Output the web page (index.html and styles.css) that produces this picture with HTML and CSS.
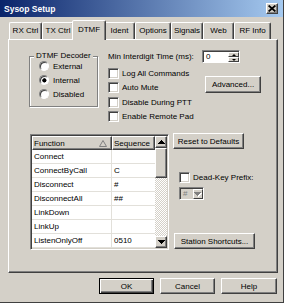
FILE: index.html
```html
<!DOCTYPE html>
<html lang="en">

<head>
    <meta charset="UTF-8">
    <meta name="viewport" content="width=device-width, initial-scale=1.0">
    <title>Sysop Setup</title>
    <link rel="stylesheet" href="styles.css">
</head>

<body>

    <div class="window">
        <div class="titlebar">
            <span class="title">Sysop Setup</span>
            <span class="close-btn">
                <svg width="8" height="7" viewBox="0 0 8 7"><path d="M0.6 0.5l6.8 6M7.4 0.5l-6.8 6" stroke="#000" stroke-width="1.7" fill="none"/></svg>
            </span>
        </div>

        <div class="tabs">
            <div class="tab">RX Ctrl</div>
            <div class="tab">TX Ctrl</div>
            <div class="tab active">DTMF</div>
            <div class="tab">Ident</div>
            <div class="tab">Options</div>
            <div class="tab">Signals</div>
            <div class="tab">Web</div>
            <div class="tab">RF Info</div>
        </div>

        <div class="panel">
            <div class="top-row">
                <div class="group">
                    <div class="group-title">DTMF Decoder</div>
                    <label class="radio"><span class="radio-dot"></span>External</label>
                    <label class="radio"><span class="radio-dot checked"></span>Internal</label>
                    <label class="radio"><span class="radio-dot"></span>Disabled</label>
                </div>

                <div class="top-right">
                    <div class="interdigit">
                        <span class="interdigit-label">Min Interdigit Time (ms):</span>
                        <div class="spinbox">
                            <span class="spin-value">0</span>
                            <div class="spin-buttons">
                                <span class="spin-btn"><svg width="5" height="3" viewBox="0 0 5 3"><path d="M2 0h1v1h1v1h1v1H0V2h1V1h1z"/></svg></span>
                                <span class="spin-btn"><svg width="5" height="3" viewBox="0 0 5 3"><path d="M0 0h5v1H4v1H3v1H2V2H1V1H0z"/></svg></span>
                            </div>
                        </div>
                    </div>
                    <div class="options">
                        <div class="check-list">
                            <label class="check"><span class="check-box"></span>Log All Commands</label>
                            <label class="check"><span class="check-box"></span>Auto Mute</label>
                            <label class="check"><span class="check-box"></span>Disable During PTT</label>
                            <label class="check"><span class="check-box"></span>Enable Remote Pad</label>
                        </div>
                        <button class="btn advanced">Advanced...</button>
                    </div>
                </div>
            </div>

            <div class="bottom-row">
                <div class="listview">
                    <div class="lv-table">
                        <div class="lv-header">
                            <div class="lv-head">Function
                                <svg width="8" height="7" viewBox="0 0 8 7"><path d="M4 0.5L7.5 6.5H0.5Z" fill="none" stroke="#808080"/></svg>
                            </div>
                            <div class="lv-head">Sequence</div>
                        </div>
                        <div class="lv-row"><span class="lv-cell">Connect</span><span class="lv-cell"></span></div>
                        <div class="lv-row"><span class="lv-cell">ConnectByCall</span><span class="lv-cell">C</span></div>
                        <div class="lv-row"><span class="lv-cell">Disconnect</span><span class="lv-cell">#</span></div>
                        <div class="lv-row"><span class="lv-cell">DisconnectAll</span><span class="lv-cell">##</span></div>
                        <div class="lv-row"><span class="lv-cell">LinkDown</span><span class="lv-cell"></span></div>
                        <div class="lv-row"><span class="lv-cell">LinkUp</span><span class="lv-cell"></span></div>
                        <div class="lv-row"><span class="lv-cell">ListenOnlyOff</span><span class="lv-cell">0510</span></div>
                    </div>
                    <div class="scrollbar">
                        <span class="sb-btn"><svg width="7" height="4" viewBox="0 0 7 4"><path d="M3 0h1v1h1v1h1v1h1v1H0V3h1V2h1V1h1z"/></svg></span>
                        <span class="sb-thumb"></span>
                        <span class="sb-track"></span>
                        <span class="sb-btn"><svg width="7" height="4" viewBox="0 0 7 4"><path d="M0 0h7v1H6v1H5v1H4v1H3V3H2V2H1V1H0z"/></svg></span>
                    </div>
                </div>

                <div class="side">
                    <button class="btn reset">Reset to Defaults</button>
                    <label class="deadkey"><span class="check-box"></span>Dead-Key Prefix:</label>
                    <div class="combo">
                        <span class="combo-value">#</span>
                        <span class="combo-btn"><svg width="8" height="5" viewBox="0 0 8 5"><path d="M1 1h7v1H7v1H6v1H5v1H4V4H3V3H2V2H1z" fill="#fff"/><path d="M0 0h7v1H6v1H5v1H4v1H3V3H2V2H1V1H0z" fill="#808080"/></svg></span>
                    </div>
                    <button class="btn shortcuts">Station Shortcuts...</button>
                </div>
            </div>
        </div>

        <div class="dialog-buttons">
            <button class="btn btn-default">OK</button>
            <button class="btn">Cancel</button>
            <button class="btn help">Help</button>
        </div>
    </div>

</body>

</html>
```

FILE: styles.css
```css
body {
    margin: 0;
    font-family: "Liberation Sans", Arial, sans-serif;
    font-size: 8px;
    color: #000;
}

.window {
    width: 284px;
    height: 303px;
    box-sizing: border-box;
    background: #D4D0C8;
    border-right: 1px solid #404040;
    border-bottom: 1px solid #404040;
    display: flex;
    flex-direction: column;
}

/* title bar */
.titlebar {
    height: 17px;
    flex: none;
    display: flex;
    align-items: center;
    padding: 0 5px 0 4px;
    background: linear-gradient(90deg, #0A246A, #A6CAF0);
    color: #fff;
    font-weight: bold;
    font-size: 8.5px;
}

.close-btn {
    margin-left: auto;
    width: 12px;
    height: 11px;
    box-sizing: border-box;
    background: #D4D0C8;
    border: 1px solid;
    border-color: #fff #404040 #404040 #fff;
    box-shadow: inset -1px -1px #808080;
    display: flex;
    align-items: center;
    justify-content: center;
}

/* tabs */
.tabs {
    display: grid;
    grid-template-columns: 33px 32px 30px 31px 36px 32px 31px 37px;
    align-items: end;
    height: 19px;
    margin-top: 3px;
    padding-left: 9px;
    flex: none;
}

.tab {
    height: 17px;
    box-sizing: border-box;
    border: 1px solid;
    border-bottom: none;
    border-color: #fff #404040 transparent #fff;
    box-shadow: inset -1px 0 #808080;
    border-radius: 2px 2px 0 0;
    line-height: 15px;
    text-align: center;
    white-space: nowrap;
}

.tab.active {
    height: 20px;
    margin: 0 -2px -1px;
    position: relative;
    z-index: 1;
    background: #D4D0C8;
    line-height: 17px;
}

/* main panel */
.panel {
    height: 234px;
    flex: none;
    box-sizing: border-box;
    margin: 0 5px 0 8px;
    border: 1px solid;
    border-color: #fff #404040 #404040 #fff;
    box-shadow: inset -1px -1px #808080;
}

.top-row {
    display: flex;
    align-items: flex-start;
    margin-top: 10px;
    padding-left: 20px;
}

.group {
    width: 69px;
    box-sizing: border-box;
    margin-top: 6px;
    border: 1px solid #808080;
    box-shadow: 1px 1px #fff, inset 1px 1px #fff;
    padding: 0 0 5px 9px;
}

.group-title {
    width: fit-content;
    margin: -7px 0 -3px -5px;
    padding: 0 2px;
    background: #D4D0C8;
    line-height: 12px;
}

.radio {
    display: flex;
    align-items: center;
    gap: 4px;
    height: 14px;
}

.radio-dot {
    width: 10px;
    height: 10px;
    box-sizing: border-box;
    border-radius: 50%;
    background: #fff;
    border: 1px solid;
    border-color: #808080 #fff #fff #808080;
    box-shadow: inset 1px 1px #404040;
}

.radio-dot.checked {
    background: radial-gradient(circle at 55% 55%, #000 0 1.8px, #fff 2.4px);
}

.top-right {
    margin-left: 10px;
}

.interdigit {
    display: flex;
    align-items: center;
    height: 13px;
}

.interdigit-label {
    width: 94px;
    white-space: nowrap;
}

.spinbox {
    width: 38px;
    height: 13px;
    box-sizing: border-box;
    display: flex;
    background: #fff;
    border: 1px solid;
    border-color: #808080 #fff #fff #808080;
    padding: 1px 0 0 1px;
    box-shadow: inset 1px 1px #404040;
}

.spin-value {
    flex: 1;
    padding-left: 2px;
    line-height: 10px;
}

.spin-buttons {
    width: 11px;
    display: flex;
    flex-direction: column;
}

.spin-btn {
    flex: 1;
    box-sizing: border-box;
    background: #D4D0C8;
    border: 1px solid;
    border-color: #fff #404040 #404040 #fff;
    display: flex;
    align-items: center;
    justify-content: center;
}

.spin-btn svg {
    width: 4px;
    height: 2px;
}

.options {
    display: flex;
    align-items: flex-start;
    margin-top: 3px;
}

.check-list {
    width: 97px;
}

.check {
    display: flex;
    align-items: center;
    gap: 3px;
    height: 14.5px;
    white-space: nowrap;
}

.check-box {
    width: 11px;
    height: 11px;
    flex: none;
    box-sizing: border-box;
    background: #fff;
    border: 1px solid;
    border-color: #808080 #fff #fff #808080;
    box-shadow: inset 1px 1px #404040, inset -1px -1px #D4D0C8;
}

/* buttons */
.btn {
    font: inherit;
    color: #000;
    background: #D4D0C8;
    border: 1px solid;
    border-color: #fff #404040 #404040 #fff;
    box-shadow: inset -1px -1px #808080;
    padding: 0;
    box-sizing: border-box;
    display: flex;
    align-items: center;
    justify-content: center;
    white-space: nowrap;
}

.advanced {
    width: 56px;
    height: 17px;
    margin-top: 10px;
}

/* list view */
.bottom-row {
    display: flex;
    margin-top: 10px;
    padding-left: 21px;
}

.listview {
    width: 139px;
    height: 116px;
    box-sizing: border-box;
    display: flex;
    background: #fff;
    border: 1px solid;
    border-color: #808080 #fff #fff #808080;
    padding: 1px;
    box-shadow: inset 1px 1px #404040, inset -1px -1px #D4D0C8;
}

.lv-table {
    width: 123px;
}

.lv-header {
    display: grid;
    grid-template-columns: 80px 43px;
    height: 14px;
}

.lv-head {
    display: flex;
    align-items: center;
    justify-content: space-between;
    padding: 0 4px 0 1px;
    background: #D4D0C8;
    border: 1px solid;
    border-color: #fff #404040 #404040 #fff;
    box-shadow: inset -1px -1px #808080;
}

.lv-row {
    display: grid;
    grid-template-columns: 80px 43px;
    height: 14px;
    box-sizing: border-box;
    border-bottom: 1px solid #E2E0DA;
}

.lv-cell {
    padding-left: 2px;
    line-height: 13px;
    white-space: nowrap;
}

.lv-cell:first-child {
    border-right: 1px solid #E2E0DA;
}

.scrollbar {
    width: 12px;
    display: flex;
    flex-direction: column;
    background: repeating-conic-gradient(#fff 0 25%, #D4D0C8 0 50%) 0 0 / 2px 2px;
}

.sb-btn,
.sb-thumb {
    box-sizing: border-box;
    background: #D4D0C8;
    border: 1px solid;
    border-color: #fff #404040 #404040 #fff;
    box-shadow: inset -1px -1px #808080;
}

.sb-btn {
    height: 12px;
    display: flex;
    align-items: center;
    justify-content: center;
}

.sb-thumb {
    height: 30px;
}

.sb-track {
    flex: 1;
}

/* right side of the list */
.side {
    display: flex;
    flex-direction: column;
    align-items: flex-start;
    margin-left: 4px;
}

.reset {
    width: 71px;
    height: 16px;
    margin-top: -1px;
}

.deadkey {
    display: flex;
    align-items: center;
    gap: 3px;
    height: 11px;
    margin: 23px 0 0 6px;
}

.combo {
    width: 25px;
    height: 13px;
    margin: 4px 0 0 6px;
    box-sizing: border-box;
    display: flex;
    background: #D4D0C8;
    border: 1px solid;
    border-color: #808080 #fff #fff #808080;
    padding: 1px 0 0 1px;
    box-shadow: inset 1px 1px #404040;
}

.combo-value {
    flex: 1;
    color: #808080;
    padding-left: 2px;
    line-height: 10px;
}

.combo-btn {
    width: 10px;
    box-sizing: border-box;
    background: #D4D0C8;
    border: 1px solid;
    border-color: #fff #404040 #404040 #fff;
    display: flex;
    align-items: center;
    justify-content: center;
}

.shortcuts {
    width: 81px;
    height: 16px;
    margin: auto 0 1px 1px;
}

/* dialog buttons */
.dialog-buttons {
    display: flex;
    justify-content: flex-end;
    gap: 6px;
    margin-top: 5px;
    padding-right: 6px;
}

.dialog-buttons .btn {
    width: 55px;
    height: 16px;
}

.dialog-buttons .help {
    width: 56px;
}

.btn-default {
    border-color: #000;
    box-shadow: inset 1px 1px #fff, inset -1px -1px #404040, inset -2px -2px #808080;
}
```
